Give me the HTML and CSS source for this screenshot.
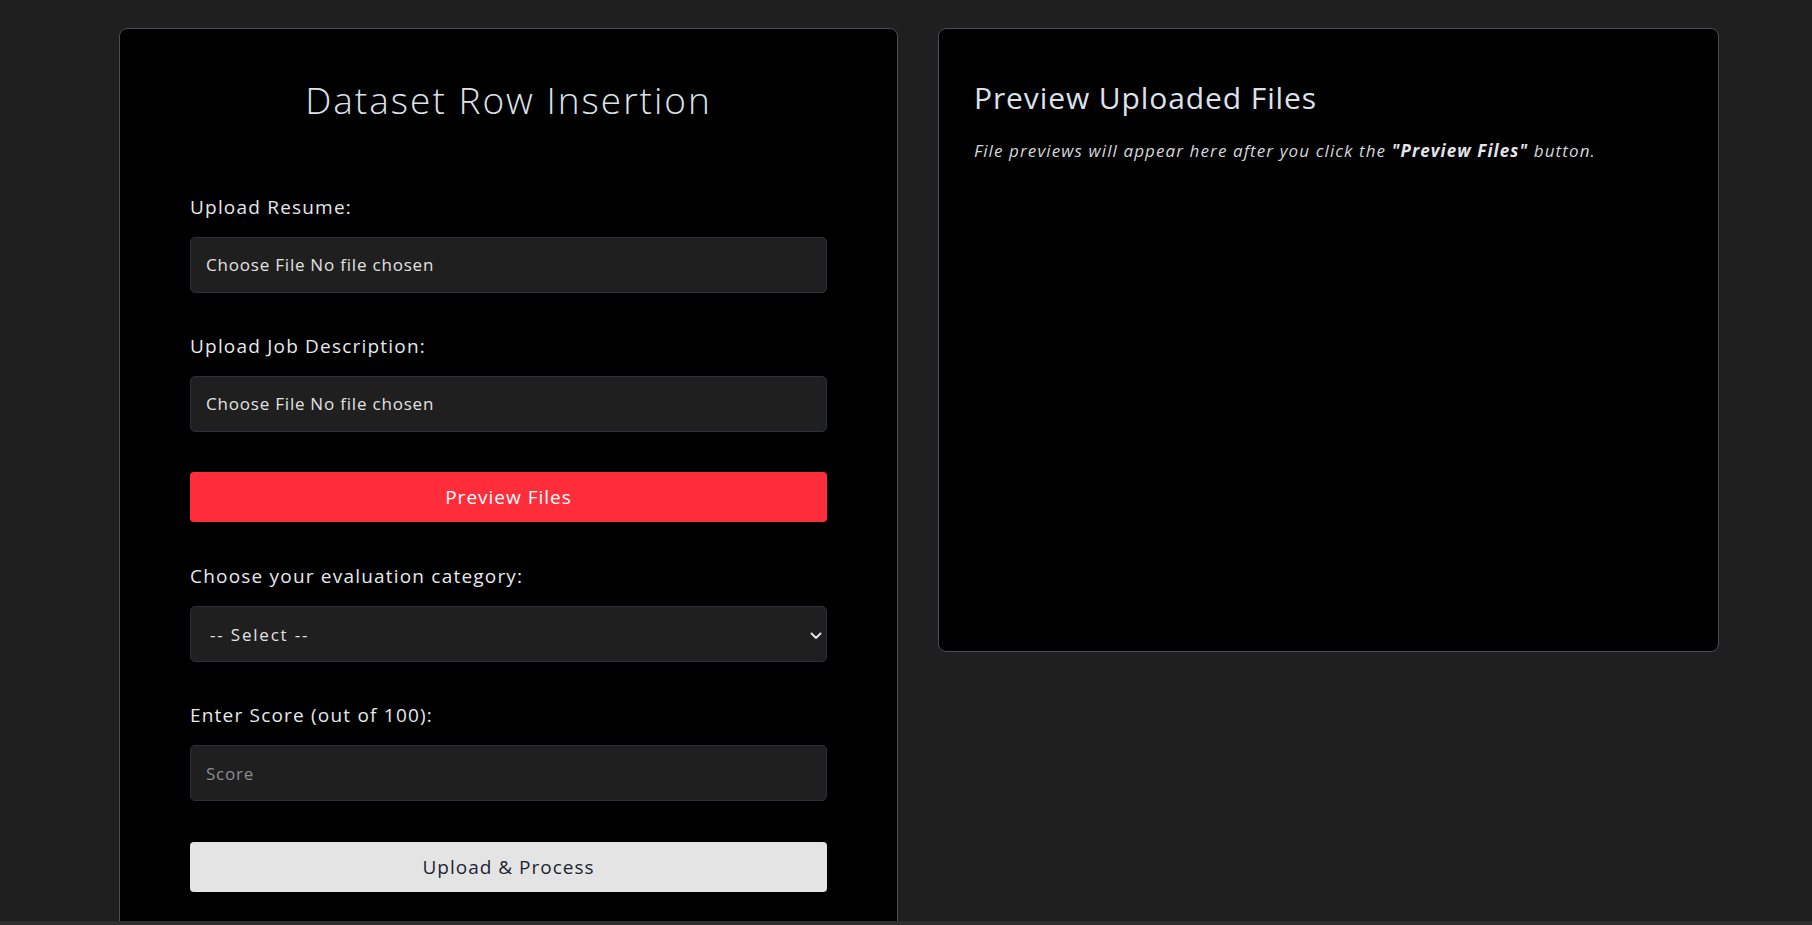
FILE: index.html
```html
<!DOCTYPE html>
<html lang="en">
<head>
<meta charset="utf-8">
<title>Dataset Row Insertion</title>
<link rel="stylesheet" href="styles.css">
</head>
<body>
<div class="page">
  <div class="card form-card">
    <h1 class="title">Dataset Row Insertion</h1>
    <form class="form">
      <div class="group">
        <label class="label" for="resume">Upload Resume:</label>
        <input class="field file" type="file" id="resume">
      </div>
      <div class="group">
        <label class="label" for="jd">Upload Job Description:</label>
        <input class="field file" type="file" id="jd">
      </div>
      <button type="button" class="btn btn-red">Preview Files</button>
      <div class="group">
        <label class="label" for="cat">Choose your evaluation category:</label>
        <div class="select-wrap">
          <select class="field select" id="cat">
            <option>-- Select --</option>
          </select>
          <svg class="chev" width="12" height="8" viewBox="0 0 12 8"><path d="M1.5 1.5 L6 6 L10.5 1.5" fill="none" stroke="#e4e4e4" stroke-width="2" stroke-linecap="round" stroke-linejoin="round"/></svg>
        </div>
      </div>
      <div class="group group-last">
        <label class="label" for="score">Enter Score (out of 100):</label>
        <input class="field text" type="number" id="score" placeholder="Score">
      </div>
      <button type="button" class="btn btn-light">Upload &amp; Process</button>
    </form>
  </div>
  <div class="card preview-card">
    <h2 class="subtitle">Preview Uploaded Files</h2>
    <p class="hint">File previews will appear here after you click the <strong>"Preview Files"</strong> button.</p>
  </div>
</div>
<div class="bottom-strip"></div>
</body>
</html>
```

FILE: styles.css
```css
* { box-sizing: border-box; }
html, body { margin: 0; padding: 0; }
body {
  background: #1f1f1f;
  font-family: "Open Sans", "Noto Sans", sans-serif;
  color: #e2e5ea;
  overflow: hidden;
  height: 925px;
}
.page {
  display: flex;
  align-items: flex-start;
  gap: 40px;
  padding: 28px 0 0 119px;
}
.card {
  background: #000;
  border: 1px solid #474e5a;
  border-radius: 8px;
}
.form-card {
  flex: 0 0 779px;
  padding: 46px 70px 60px;
}
.title {
  margin: 0 0 70px;
  text-align: center;
  font-size: 37px;
  font-weight: 300;
  letter-spacing: 2px;
  color: #dde2ea;
  line-height: 49px;
}
.form { display: flex; flex-direction: column; }
.group { display: flex; flex-direction: column; margin-bottom: 40px; }
.group-last { margin-bottom: 41px; }
.label {
  font-size: 19px;
  letter-spacing: 1.2px;
  line-height: 27px;
  margin-bottom: 16px;
  color: #e6e8ec;
}
.field {
  display: block;
  width: 100%;
  height: 56px;
  background: #1f1f1f;
  border: 1px solid #2b313b;
  border-radius: 5px;
  color: #e2e2e2;
  font-family: inherit;
  font-size: 17px;
  letter-spacing: 0.8px;
  padding: 0 15px;
  outline: none;
}
.file { padding: 15px 15px; line-height: 24px; }
.file::file-selector-button {
  background: none;
  border: none;
  color: inherit;
  font: inherit;
  letter-spacing: inherit;
  padding: 0;
  margin: 0 5px 0 0;
}
.select-wrap { position: relative; }
.select {
  appearance: none;
  -webkit-appearance: none;
  padding-left: 19px;
  letter-spacing: 1.8px;
}
.chev { position: absolute; right: 5px; top: 26px; }
.text::placeholder { color: #8b8d91; }
.text::-webkit-outer-spin-button, .text::-webkit-inner-spin-button { -webkit-appearance: none; margin: 0; }
.btn {
  display: block;
  width: 100%;
  height: 50px;
  border: none;
  border-radius: 4px;
  font-family: inherit;
  font-size: 19px;
  letter-spacing: 1px;
  cursor: pointer;
}
.btn-red { background: #ff2c3a; color: #fff; margin-bottom: 41px; }
.btn-light { background: #e4e4e4; color: #1d2433; }
.preview-card {
  flex: 0 0 781px;
  height: 624px;
  padding: 48px 35px;
}
.subtitle {
  margin: 0 0 20px;
  font-size: 30px;
  font-weight: 400;
  letter-spacing: 0.9px;
  line-height: 41px;
  color: #dde2ea;
}
.hint {
  margin: 0;
  font-size: 17px;
  letter-spacing: 1.1px;
  line-height: 25px;
  font-style: italic;
  color: #d4d7dc;
}
.hint strong { font-weight: 700; color: #e2e5ea; }
.bottom-strip {
  position: fixed;
  left: 0;
  right: 0;
  bottom: 0;
  height: 4px;
  background: #2f2f2f;
}
```
